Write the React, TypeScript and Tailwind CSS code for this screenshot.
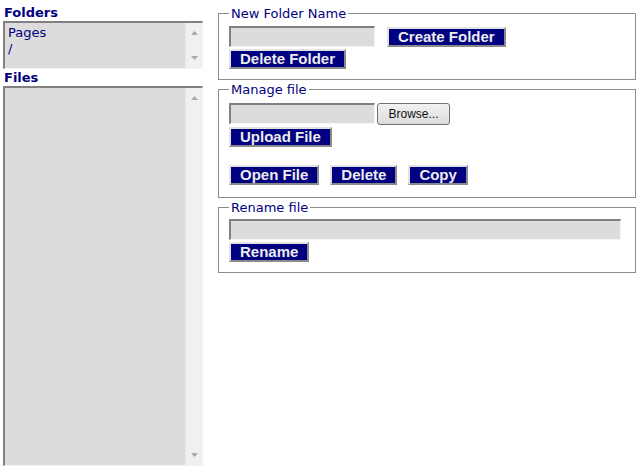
import React from "react";

const btn =
  "block bg-[#000080] text-[#ececec] font-bold text-[15px] leading-[16px] px-[9px] border-2 border-t-[#e2e2e2] border-l-[#e2e2e2] border-b-[#8a8a8a] border-r-[#8a8a8a] [font-family:'Liberation_Sans',Arial,sans-serif]";

const field =
  "h-[21px] bg-[#dcdcdc] border-t-2 border-l-2 border-b border-r border-t-[#808080] border-l-[#808080] border-b-[#f4f4f4] border-r-[#f4f4f4]";

function ScrollBar() {
  return (
    <div className="w-[17px] h-full bg-[#f0f0f0] border-l border-[#e6e6e6] flex flex-col justify-between items-center py-[8px]">
      <svg width="7" height="4" viewBox="0 0 7 4">
        <path d="M3.5 0 L7 4 L0 4 Z" fill="#a8a8a8" />
      </svg>
      <svg width="7" height="4" viewBox="0 0 7 4">
        <path d="M0 0 L7 0 L3.5 4 Z" fill="#a8a8a8" />
      </svg>
    </div>
  );
}

function ListBox({ items, height }: { items: string[]; height: string }) {
  return (
    <div
      className={`flex w-[200px] ${height} bg-[#dcdcdc] border-t-2 border-l-2 border-t-[#808080] border-l-[#808080] border-b border-r border-b-[#f4f4f4] border-r-[#f4f4f4]`}
    >
      <div className="flex-1 pl-[3px] pt-[2px] text-[13px] leading-[16px] text-[#000080]">
        {items.map((it) => (
          <div key={it}>{it}</div>
        ))}
      </div>
      <ScrollBar />
    </div>
  );
}

function Box({ title, children, className = "" }: { title: string; children: React.ReactNode; className?: string }) {
  return (
    <fieldset className={`border border-[#8c8c8c] px-[10px] ${className}`}>
      <legend className="px-[2px] text-[13px] leading-[15px] text-[#000080]">{title}</legend>
      {children}
    </fieldset>
  );
}

export default function App() {
  return (
    <div className="flex w-[637px] h-[468px] bg-white [font-family:'DejaVu_Sans',Verdana,sans-serif]">
      {/* Left column */}
      <div className="ml-[3px] w-[200px] pt-[4px]">
        <div className="text-[13px] leading-[17px] font-bold text-[#000080] pl-[1px]">Folders</div>
        <ListBox items={["Pages", "/"]} height="h-[48px]" />
        <div className="text-[13px] leading-[17px] font-bold text-[#000080] pl-[1px]">Files</div>
        <ListBox items={[]} height="h-[380px]" />
      </div>

      {/* Right column */}
      <div className="ml-[15px] w-[418px] pt-[6px]">
        <Box title="New Folder Name" className="pb-[10px]">
          <div className="flex items-center gap-[12px] mt-[5px]">
            <div className={`${field} w-[146px]`} />
            <button className={btn}>Create Folder</button>
          </div>
          <button className={`${btn} mt-[2px]`}>Delete Folder</button>
        </Box>

        <Box title="Manage file" className="mt-[2px] pb-[12px]">
          <div className="flex items-start gap-[2px] mt-[6px]">
            <div className={`${field} w-[146px]`} />
            <button className="h-[22px] w-[73px] rounded-[3px] border border-[#707070] bg-gradient-to-b from-[#f2f2f2] to-[#dcdcdc] text-[12px] text-[#111] [font-family:'Liberation_Sans',Arial,sans-serif]">
              Browse...
            </button>
          </div>
          <button className={`${btn} mt-[2px]`}>Upload File</button>
          <div className="flex gap-[11px] mt-[18px]">
            <button className={btn}>Open File</button>
            <button className={btn}>Delete</button>
            <button className={btn}>Copy</button>
          </div>
        </Box>

        <Box title="Rename file" className="mt-[2px] pb-[10px]">
          <div className={`${field} w-[392px] mt-[4px]`} />
          <button className={`${btn} mt-[2px]`}>Rename</button>
        </Box>
      </div>
    </div>
  );
}
